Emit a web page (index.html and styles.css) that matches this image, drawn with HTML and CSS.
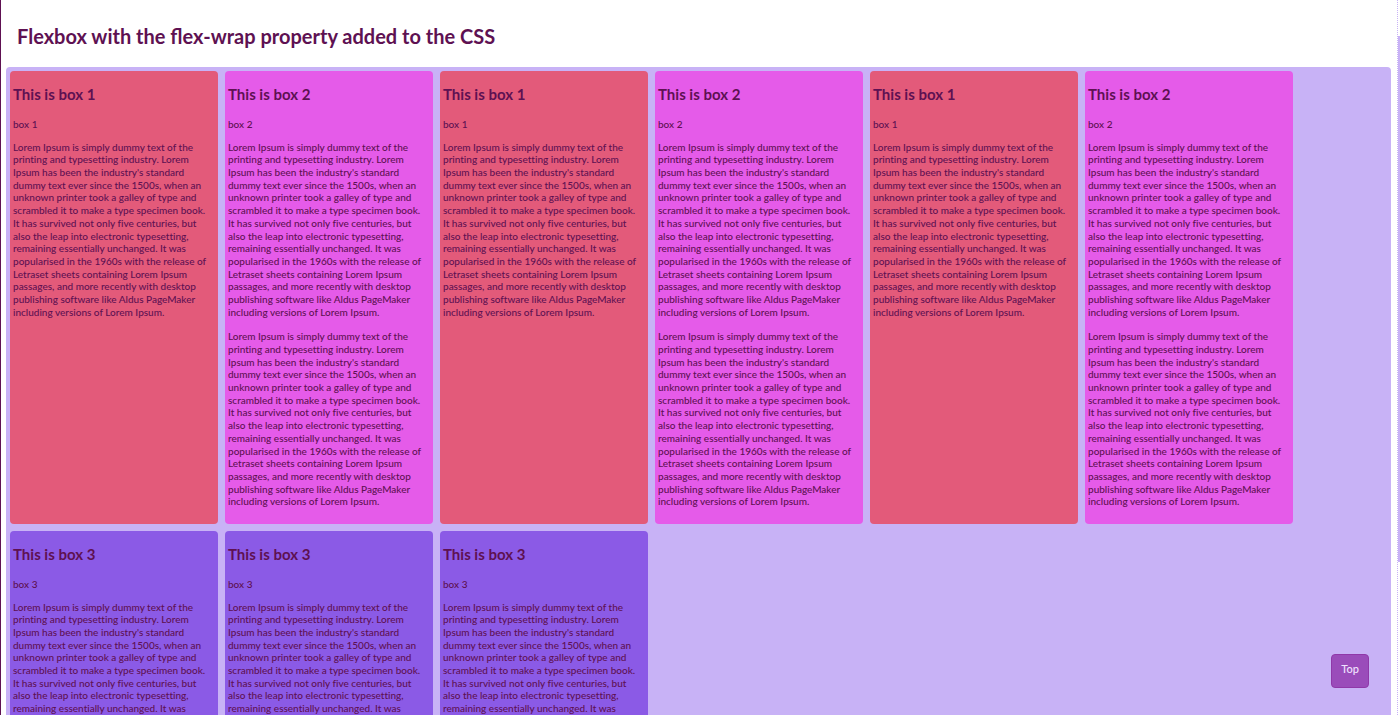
FILE: index.html
```
<!DOCTYPE html>
<html lang="en">
<head>
<meta charset="utf-8">
<title>Flexbox with flex-wrap</title>
<link rel="stylesheet" href="styles.css">
<script src="boxes.js" defer></script>
</head>
<body>
<main class="page" id="top">
<h1 class="title">Flexbox with the flex-wrap property added to the CSS</h1>
<div class="wrap"></div>
</main>
<a class="to-top" href="#top">Top</a>
<div class="scrollbar" aria-hidden="true"><div class="thumb"></div></div>
</body>
</html>
```
FILE: boxes.js
```
const lorem = "Lorem Ipsum is simply dummy text of the printing and typesetting industry. Lorem Ipsum has been the industry's standard dummy text ever since the 1500s, when an unknown printer took a galley of type and scrambled it to make a type specimen book. It has survived not only five centuries, but also the leap into electronic typesetting, remaining essentially unchanged. It was popularised in the 1960s with the release of Letraset sheets containing Lorem Ipsum passages, and more recently with desktop publishing software like Aldus PageMaker including versions of Lorem Ipsum.";

const wrap = document.querySelector(".wrap");

function add(parent, tag, className, text) {
  const el = document.createElement(tag);
  el.className = className;
  el.textContent = text;
  parent.append(el);
  return el;
}

for (const kind of [1, 2, 1, 2, 1, 2, 3, 3, 3]) {
  const box = add(wrap, "section", "box box-" + kind, "");
  add(box, "h2", "box-title", "This is box " + kind);
  add(box, "p", "box-label", "box " + kind);
  const paragraphs = kind === 2 ? 2 : 1;
  for (let i = 0; i < paragraphs; i++) add(box, "p", "box-text", lorem);
}
```
FILE: styles.css
```
* { box-sizing: border-box; }

body {
  margin: 0;
  height: 100vh;
  overflow: hidden;
  background: #fff;
  color: #5e1152;
  font-family: Lato, sans-serif;
  font-size: 10px;
  font-weight: 500;
  line-height: 1.27;
}

.page {
  min-height: 100vh;
  padding: 24px 9px 8px 5px;
  border-left: 1px solid #5e1152;
}

.title {
  margin: 0 0 19px;
  padding-left: 11px;
  font-size: 20px;
  line-height: 24px;
}

.wrap {
  display: flex;
  flex-wrap: wrap;
  gap: 7px;
  padding: 4px;
  border-radius: 4px;
  background: #c8b2f6;
}

.box {
  width: 208px;
  padding: 3px 3px 4px;
  border-radius: 4px;
}

.box-1 { background: #e35a7a; }
.box-2 { background: #e55be9; }
.box-3 { background: #8b5ae6; }

.box-title {
  margin: 11px 0 15px;
  font-size: 15px;
  line-height: 18px;
}

.box-label { margin: 0 0 10px; }

.box-text {
  margin: 0 0 12px;
  padding-right: 4px;
  font-variant-ligatures: no-common-ligatures;
}

.to-top {
  position: fixed;
  right: 31px;
  bottom: 27px;
  padding: 8px 9px 12px;
  border: 1px solid #9038a8;
  border-radius: 4px;
  background: #9a4cba;
  color: #f0e2ff;
  font-size: 11px;
  line-height: 12px;
  text-decoration: none;
}

.scrollbar {
  position: fixed;
  top: 0;
  right: 0;
  bottom: 0;
  width: 3px;
  padding-top: 36px;
  border-left: 1px dotted #c8b2f6;
}

.thumb {
  height: 77.5%;
  background: #c8b2f6;
}
```
